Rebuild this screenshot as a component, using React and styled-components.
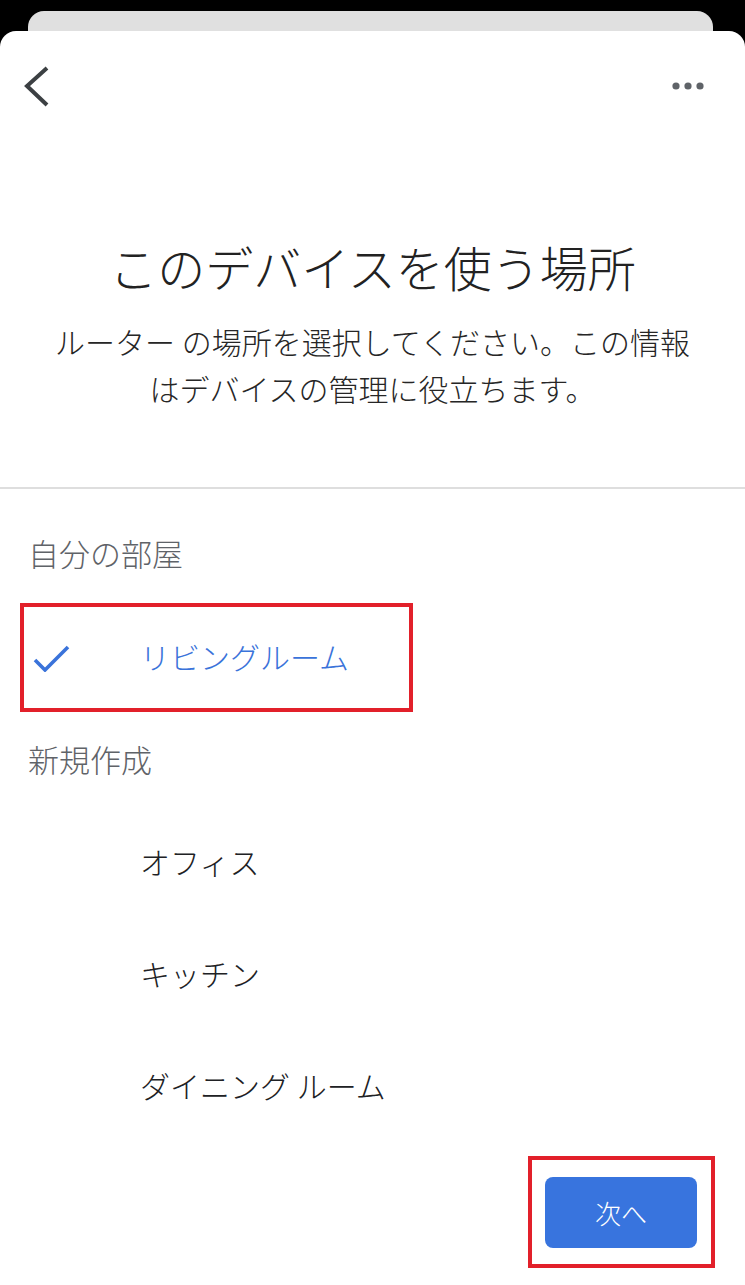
import React from "react";
import styled, { createGlobalStyle } from "styled-components";

const colors = {
  text: "#202124",
  muted: "#5f6368",
  blue: "#3a73da",
  button: "#3874de",
  divider: "#dedede",
  mark: "#e2202a",
};

const GlobalStyle = createGlobalStyle`
  html, body {
    margin: 0;
    padding: 0;
    background: #000;
  }
  body {
    font-family: "Noto Sans CJK JP", "Noto Sans", sans-serif;
    color: ${colors.text};
  }
`;

const Screen = styled.div`
  width: 745px;
  height: 1285px;
  padding-top: 11px;
  box-sizing: border-box;
  background: #000;
  display: flex;
  flex-direction: column;
  overflow: hidden;
`;

const BehindCard = styled.div`
  height: 20px;
  margin: 0 32px 0 28px;
  background: #e0e0e0;
  border-radius: 16px 16px 0 0;
  flex: none;
`;

const Sheet = styled.div`
  flex: 1;
  background: #fff;
  border-radius: 16px 16px 0 0;
  display: flex;
  flex-direction: column;
  padding-bottom: 17px;
`;

const TopBar = styled.div`
  height: 110px;
  display: flex;
  align-items: center;
  justify-content: space-between;
  padding: 0 41px 0 20px;
  flex: none;
`;

const Header = styled.div`
  text-align: center;
  padding: 95px 20px 75px;
`;

const Title = styled.h1`
  margin: 0;
  font-size: 48px;
  line-height: 60px;
  font-weight: 300;
  color: #222;
`;

const Subtitle = styled.p`
  margin: 22px 0 0;
  font-size: 30px;
  line-height: 47px;
  font-weight: 300;
  color: #262626;
`;

const Divider = styled.hr`
  margin: 0;
  border: none;
  height: 2px;
  background: ${colors.divider};
`;

const SectionLabel = styled.div`
  height: ${({ $height }) => $height}px;
  margin-top: ${({ $offset }) => $offset || 0}px;
  display: flex;
  align-items: center;
  padding-left: 28px;
  font-size: 31px;
  font-weight: 300;
  color: ${colors.muted};
`;

const Row = styled.div`
  width: 393px;
  height: ${({ $marked }) => ($marked ? 109 : 112)}px;
  margin: ${({ $marked }) => ($marked ? "4px 0 0 20px" : "0 0 0 20px")};
  padding: ${({ $marked }) => ($marked ? "0 0 4px 9px" : "0 0 0 9px")};
  box-sizing: border-box;
  border: 4px solid ${({ $marked }) => ($marked ? colors.mark : "transparent")};
  display: flex;
  align-items: center;
`;

const IconSlot = styled.div`
  width: 107px;
  flex: none;
  display: flex;
  align-items: center;
`;

const RowLabel = styled.span`
  font-size: 30px;
  font-weight: 300;
  color: ${({ $selected }) => ($selected ? colors.blue : colors.text)};
`;

const Footer = styled.div`
  margin-top: auto;
  display: flex;
  justify-content: flex-end;
  padding-right: 30px;
`;

const MarkBox = styled.div`
  border: 4px solid ${colors.mark};
  padding: 17px 14px 16px 13px;
`;

const NextButton = styled.button`
  width: 152px;
  height: 71px;
  border: none;
  border-radius: 8px;
  background: ${colors.button};
  color: #fff;
  font-family: inherit;
  font-size: 26px;
  font-weight: 300;
  cursor: pointer;
`;

const BackIcon = () => (
  <svg width="36" height="48" viewBox="0 0 36 48">
    <polyline
      points="27,6 7,24 27,43"
      fill="none"
      stroke="#3c4043"
      strokeWidth="4"
    />
  </svg>
);

const MoreIcon = () => (
  <svg width="32" height="10" viewBox="0 0 32 10">
    <circle cx="4" cy="5" r="3.6" fill={colors.muted} />
    <circle cx="16" cy="5" r="3.6" fill={colors.muted} />
    <circle cx="28" cy="5" r="3.6" fill={colors.muted} />
  </svg>
);

const CheckIcon = () => (
  <svg width="40" height="32" viewBox="0 0 40 32">
    <polyline
      points="2,20 12,30 35,7"
      fill="none"
      stroke={colors.blue}
      strokeWidth="3.6"
    />
  </svg>
);

const rooms = ["オフィス", "キッチン", "ダイニング ルーム"];

export default function App() {
  return (
    <Screen>
      <GlobalStyle />
      <BehindCard />
      <Sheet>
        <TopBar>
          <BackIcon />
          <MoreIcon />
        </TopBar>
        <Header>
          <Title>このデバイスを使う場所</Title>
          <Subtitle>
            ルーター の場所を選択してください。この情報
            <br />
            はデバイスの管理に役立ちます。
          </Subtitle>
        </Header>
        <Divider />
        <SectionLabel $height={94} $offset={16}>自分の部屋</SectionLabel>
        <Row $marked>
          <IconSlot>
            <CheckIcon />
          </IconSlot>
          <RowLabel $selected>リビングルーム</RowLabel>
        </Row>
        <SectionLabel $height={93}>新規作成</SectionLabel>
        {rooms.map((room) => (
          <Row key={room}>
            <IconSlot />
            <RowLabel>{room}</RowLabel>
          </Row>
        ))}
        <Footer>
          <MarkBox>
            <NextButton>次へ</NextButton>
          </MarkBox>
        </Footer>
      </Sheet>
    </Screen>
  );
}
